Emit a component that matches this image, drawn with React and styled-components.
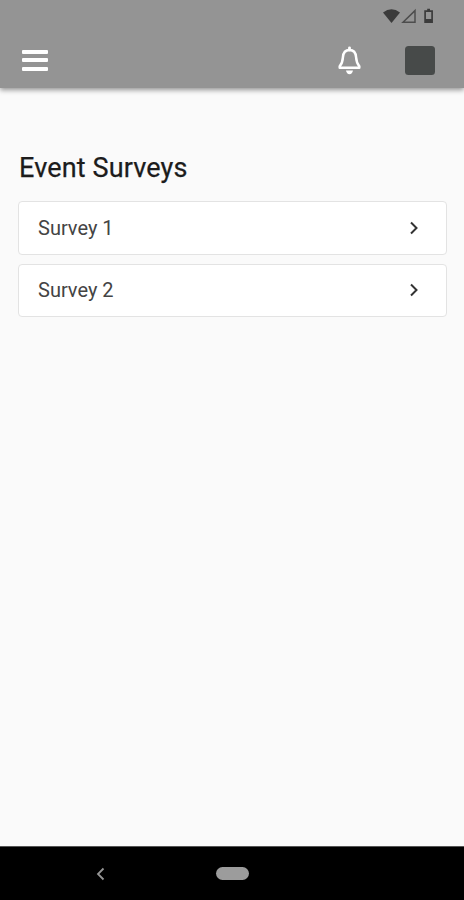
import React from "react";
import styled, { createGlobalStyle } from "styled-components";

const GlobalStyle = createGlobalStyle`
  * { box-sizing: border-box; }
  body { margin: 0; background: #fafafa; font-family: Roboto, "Liberation Sans", sans-serif; }
  button { border: 0; padding: 0; background: none; font: inherit; color: inherit; }
  svg { display: block; flex: none; }
`;

const Screen = styled.div`
  display: flex;
  flex-direction: column;
  height: 900px;
  background: #fafafa;
  overflow: hidden;
`;

const Header = styled.header`
  height: 88px;
  flex: none;
  background: #949494;
  box-shadow: 0 2px 5px rgba(0, 0, 0, 0.42);
`;

const StatusBar = styled.div`
  display: flex;
  justify-content: flex-end;
  height: 32px;
  padding: 8px 30px 0 0;
`;

const Toolbar = styled.div`
  display: flex;
  align-items: center;
  height: 56px;
  padding: 0 29px 0 22px;
`;

const MenuButton = styled.button`
  display: flex;
  flex-direction: column;
  gap: 4.5px;
  width: 26px;
  margin-right: auto;
`;

const MenuBar = styled.span`
  height: 4px;
  border-radius: 1px;
  background: #fff;
`;

const BellButton = styled.button`
  margin-right: 43px;
`;

const Avatar = styled.div`
  width: 30px;
  height: 29px;
  border-radius: 3.5px;
  background: #474a49;
`;

const Content = styled.main`
  flex: 1;
  padding: 64px 17px 0 18px;
`;

const Title = styled.h1`
  margin: 0 0 17px;
  padding-left: 1px;
  font-size: 27px;
  line-height: 32px;
  font-weight: 400;
  letter-spacing: 0.14px;
  color: #1c1c1c;
  -webkit-text-stroke: 0.25px #1c1c1c;
`;

const List = styled.div`
  display: flex;
  flex-direction: column;
  gap: 9px;
`;

const SurveyRow = styled.button`
  display: flex;
  align-items: center;
  justify-content: space-between;
  width: 100%;
  height: ${(p) => p.$height}px;
  padding: 0 27px ${(p) => p.$lift}px 19px;
  border: 1px solid #e3e3e3;
  border-radius: 4px;
  background: #fff;
  color: #444;
  font-size: 20px;
  line-height: 24px;
`;

const NavBar = styled.nav`
  display: flex;
  align-items: center;
  height: 54px;
  flex: none;
  padding-left: 95px;
  border-top: 1px solid #555;
  background: #000;
`;

const HomePill = styled.span`
  width: 33px;
  height: 13px;
  margin-left: 110px;
  border-radius: 7px;
  background: #9c9c9c;
`;

const StatusIcons = () => (
  <svg width="52" height="16" viewBox="0 0 52 16" fill="none">
    <path d="M1 4.6Q9.5-2 18 4.6L9.5 15Z" fill="#3b3b3b" />
    <path d="M21 14.3 33 2.6V14.3Z" stroke="#4d4d4d" strokeWidth="1.5" />
    <path d="M43.1 3.1H50.1V14.2H43.1ZM45.2 1.7H48" stroke="#3b3b3b" strokeWidth="1.7" />
    <path d="M43 11H50V14H43Z" fill="#3b3b3b" />
  </svg>
);

const Bell = () => (
  <svg width="24" height="29" viewBox="0 0 24 29" fill="none">
    <path d="M11.5 1.8V4" stroke="#fff" strokeWidth="2.8" strokeLinecap="round" />
    <path d="M11.5 4C7.4 4 5.2 7 4.9 11.3C4.7 15 4 17.5 1.7 20.3V21.7H21.3V20.3C19 17.5 18.3 15 18.1 11.3C17.8 7 15.6 4 11.5 4Z" stroke="#fff" strokeWidth="2.5" strokeLinejoin="round" />
    <path d="M8 24.5H15Q14.3 28.2 11.5 28.2T8 24.5Z" fill="#fff" />
  </svg>
);

const Chevron = () => (
  <svg width="10" height="14" viewBox="0 0 10 14" fill="none">
    <path d="M2 1.5 7.5 7 2 12.5" stroke="#333" strokeWidth="2" />
  </svg>
);

const Back = () => (
  <svg width="11" height="14" viewBox="0 0 11 14" fill="none">
    <path d="M8.5 1.5 3 7 8.5 12.5" stroke="#969696" strokeWidth="1.8" />
  </svg>
);

const surveys = [
  { name: "Survey 1", height: 54, lift: 0 },
  { name: "Survey 2", height: 53, lift: 1 },
];

export default function App() {
  return (
    <Screen>
      <GlobalStyle />
      <Header>
        <StatusBar><StatusIcons /></StatusBar>
        <Toolbar>
          <MenuButton aria-label="Menu"><MenuBar /><MenuBar /><MenuBar /></MenuButton>
          <BellButton aria-label="Notifications"><Bell /></BellButton>
          <Avatar />
        </Toolbar>
      </Header>
      <Content>
        <Title>Event Surveys</Title>
        <List>
          {surveys.map((s) => (
            <SurveyRow key={s.name} $height={s.height} $lift={s.lift}>
              {s.name}
              <Chevron />
            </SurveyRow>
          ))}
        </List>
      </Content>
      <NavBar>
        <Back />
        <HomePill />
      </NavBar>
    </Screen>
  );
}
